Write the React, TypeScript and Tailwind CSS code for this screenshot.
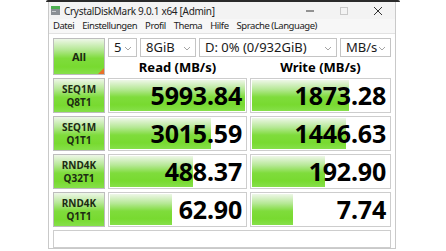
import React from "react";

type Row = {
  l1: string;
  l2: string;
  read: string;
  readPct: number;
  write: string;
  writePct: number;
};

const rows: Row[] = [
  { l1: "SEQ1M", l2: "Q8T1", read: "5993.84", readPct: 100, write: "1873.28", writePct: 71 },
  { l1: "SEQ1M", l2: "Q1T1", read: "3015.59", readPct: 75, write: "1446.63", writePct: 69 },
  { l1: "RND4K", l2: "Q32T1", read: "488.37", readPct: 62, write: "192.90", writePct: 54 },
  { l1: "RND4K", l2: "Q1T1", read: "62.90", readPct: 47, write: "7.74", writePct: 31 },
];

const green =
  "bg-[linear-gradient(to_bottom,#eef7e8_0%,#b6e896_30%,#7fdc3c_55%,#78da30_80%,#86e04a_100%)]";

function Select({ value, className }: { value: string; className: string }) {
  return (
    <div
      className={`flex items-center justify-between border border-[#c4c4c4] bg-white pl-[5px] pr-[4px] text-[13px] text-[#1a1a1a] ${className}`}
    >
      <span className="leading-none">{value}</span>
      <svg width="8" height="5" viewBox="0 0 8 5" className="mt-[1px]">
        <path d="M1 1 L4 4 L7 1" fill="none" stroke="#9a9a9a" strokeWidth="0.9" />
      </svg>
    </div>
  );
}

function ResultCell({ value, pct }: { value: string; pct: number }) {
  return (
    <div className="relative h-[35px] border border-[#cdcdcd] bg-white p-px">
      <div className={`absolute left-px top-px bottom-px ${green}`} style={{ width: `calc(${pct}% - 2px)` }} />
      <div className="relative flex h-full items-center justify-end pr-[3px] text-[25px] font-bold leading-none tracking-[-0.2px] text-black">
        {value}
      </div>
    </div>
  );
}

export default function App() {
  return (
    <div className="relative h-[251px] w-[446px] overflow-hidden bg-white" style={{ fontFamily: '"Noto Sans", "Open Sans", sans-serif' }}>
      <div className="ml-[46px] h-[2px] w-[354px] rounded-t-[3px] bg-[#2a2a2a]" />
      <div className="ml-[48px] flex h-[247px] w-[348px] flex-col border-x border-b border-[#c9c9c9] bg-white">
        {/* title bar */}
        <div className="flex h-[17px] items-center bg-[#f3f3f3]">
          <svg width="9" height="9" viewBox="0 0 9 9" className="ml-[2px] mr-[4px]">
            <rect x="0" y="0" width="9" height="3" fill="#4caf50" />
            <rect x="0" y="3" width="9" height="6" fill="#8a8f94" />
            <rect x="1" y="5" width="4" height="1" fill="#c9ccd0" />
          </svg>
          <span className="text-[10px] leading-none tracking-[-0.3px] text-[#222]">CrystalDiskMark 9.0.1 x64 [Admin]</span>
          <div className="ml-auto flex items-center text-[#333]">
            <svg width="34" height="10" viewBox="0 0 34 10">
              <path d="M13 5 L21 5" stroke="#333" strokeWidth="1" />
            </svg>
            <div className="flex w-[34px] justify-center">
              <div className="h-[8px] w-[8px] border border-[#c9c9c9]" />
            </div>
            <svg width="34" height="10" viewBox="0 0 34 10">
              <path d="M13 1 L21 9 M21 1 L13 9" stroke="#333" strokeWidth="1" />
            </svg>
          </div>
        </div>
        {/* menu */}
        <div className="flex h-[15px] items-center gap-[8px] border-b border-[#e2e2e2] bg-[#f7f7f7] pl-[4px] text-[9.5px] leading-none tracking-[-0.45px] text-[#222]">
          <span>Datei</span>
          <span>Einstellungen</span>
          <span>Profil</span>
          <span>Thema</span>
          <span>Hilfe</span>
          <span>Sprache (Language)</span>
        </div>
        {/* content */}
        <div className="flex flex-1 flex-col px-[4px] pt-[4px]">
          <div className="grid grid-cols-[52px_139px_141px] gap-x-[3px]">
            <div className={`relative row-span-2 flex h-[37px] items-center justify-center border border-[#bdbdbd] ${green}`}>
              <span className="text-[11px] font-bold leading-none text-[#1c2b12]">All</span>
              <div className="absolute bottom-0 right-0 h-0 w-0 border-b-[6px] border-l-[6px] border-b-[#e8702a] border-l-transparent" />
            </div>
            <div className="col-span-2 flex h-[19px] gap-[3px]">
              <Select value="5" className="w-[29px]" />
              <Select value="8GiB" className="w-[56px]" />
              <Select value="D: 0% (0/932GiB)" className="w-[138px]" />
              <Select value="MB/s" className="w-[51px]" />
            </div>
            <div className="flex h-[20px] items-center justify-center text-[13px] font-bold leading-none text-black">
              Read (MB/s)
            </div>
            <div className="flex h-[20px] items-center justify-center text-[13px] font-bold leading-none text-black">
              Write (MB/s)
            </div>
          </div>
          <div className="mt-[1px] grid grid-cols-[52px_139px_141px] gap-x-[3px] gap-y-[3px]">
            {rows.map((r, i) => (
              <React.Fragment key={i}>
                <div className={`flex h-[35px] flex-col items-center justify-center gap-[3px] border border-[#bdbdbd] ${green}`}>
                  <span className="text-[10px] font-bold leading-none text-[#1c2b12]">{r.l1}</span>
                  <span className="text-[10px] font-bold leading-none text-[#1c2b12]">{r.l2}</span>
                </div>
                <ResultCell value={r.read} pct={r.readPct} />
                <ResultCell value={r.write} pct={r.writePct} />
              </React.Fragment>
            ))}
          </div>
          <div className="mt-[3px] h-[18px] w-[338px] border border-[#cdcdcd] bg-white" />
        </div>
      </div>
    </div>
  );
}
